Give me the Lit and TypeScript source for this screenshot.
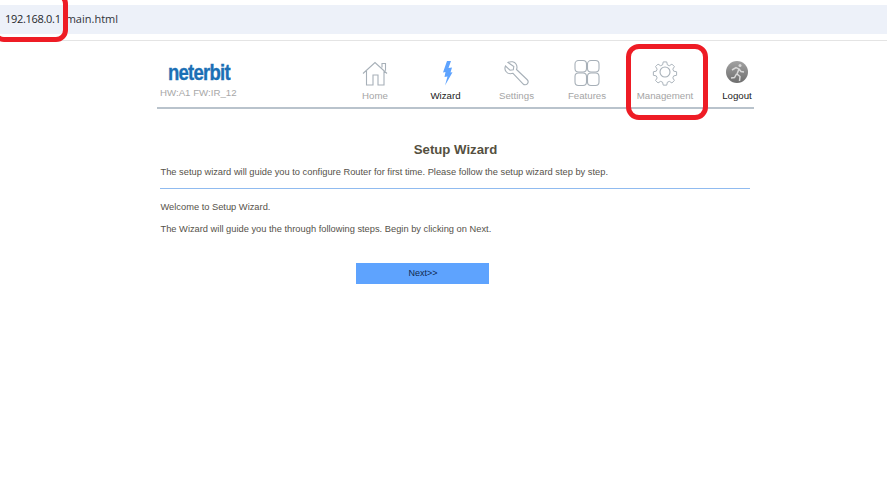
import { LitElement, html, css } from "lit";
import { customElement } from "lit/decorators.js";

@customElement("app-root")
export class AppRoot extends LitElement {
  static styles = css`
    :host { display: block; position: relative; width: 887px; height: 484px; background: #fff; overflow: hidden; font-family: "Liberation Sans", Arial, sans-serif; }
    .topbar { height: 41px; box-sizing: border-box; padding-top: 5px; border-bottom: 1px solid #e4e4e4; }
    .address { height: 29px; background: #edf1f9; display: flex; align-items: center; padding-left: 5px; padding-bottom: 2px; box-sizing: border-box; font-family: "Open Sans", "Liberation Sans", sans-serif; font-size: 11px; color: #303339; }
    .host { margin-right: 5px; color: #26282c; letter-spacing: -0.3px; }
    .page { width: 597px; margin-left: 157px; }
    .header { display: flex; height: 68px; box-sizing: border-box; border-bottom: 2px solid #b9c3cc; }
    .brand { width: 183px; flex: none; display: flex; flex-direction: column; align-items: flex-start; }
    .logo { margin: 21px 0 0 11px; font-size: 18.5px; line-height: 22px; font-weight: 700; color: #1b6fb5; letter-spacing: -0.75px; transform: scaleY(1.2); transform-origin: center; -webkit-text-stroke: 0.3px #1b6fb5; }
    .hw { margin: 2px 0 0 3px; font-size: 9.7px; line-height: 13px; color: #a8a8a8; }
    nav { flex: 1; display: grid; grid-template-columns: 70px 71px 71px 70px 86px 46px; justify-items: center; }
    .item { display: flex; flex-direction: column; align-items: center; color: #a5a5a5; font-size: 9.7px; line-height: 12px; padding-top: 18px; }
    .item svg { display: block; width: 32px; height: 28px; margin-bottom: 3px; fill: none; stroke: #a7b0b8; stroke-width: 1.1; }
    .item.dark { color: #1a1a1a; }
    .item.logout { justify-self: end; margin-right: 1px; }
    .content { padding: 0 4px 0 3px; }
    h1 { margin: 33px 0 0; text-align: center; font-size: 13.2px; line-height: 16px; font-weight: 700; color: #55503f; padding-left: 1px; }
    .lead { margin: 8px 0 0 0.5px; font-size: 9.3px; line-height: 13px; color: #56524a; }
    .rule { height: 1px; background: #90bbf0; margin-top: 9px; }
    .p1 { margin: 12px 0 0 0.5px; font-size: 9.3px; line-height: 13px; color: #56524a; }
    .p2 { margin: 9px 0 0 0.5px; font-size: 9.3px; line-height: 13px; color: #56524a; }
    .actions { margin-top: 27px; padding-left: 196px; }
    .next { display: flex; align-items: center; justify-content: center; width: 133px; height: 21px; background: #5ea3fe; color: #102a50; font-size: 9px; border: 0; padding: 0 0 1px 1px; font-family: inherit; }
    .mark { position: absolute; box-sizing: border-box; border: 5px solid #ee1c25; }
    .mark.a { left: -8px; top: -8px; width: 76px; height: 50px; border-radius: 12px; }
    .mark.b { left: 626px; top: 44px; width: 82px; height: 76px; border-radius: 13px; }
  `;

  render() {
    return html`
      <div class="topbar"><div class="address"><span class="host">192.168.0.1</span><span>main.html</span></div></div>
      <div class="page">
        <header class="header">
          <div class="brand">
            <div class="logo">neterbit</div>
            <div class="hw">HW:A1 FW:IR_12</div>
          </div>
          <nav>
            <div class="item">
              <svg viewBox="0 0 32 28"><path d="M4 14.500 16 3.500l12 11M23 8.500V4.500h3.500v7.200M7.500 12v14h6.500v-10h5v10h6V12"/></svg>
              Home
            </div>
            <div class="item dark">
              <svg viewBox="0 0 32 28"><path style="fill:#5ea3fe;stroke:none" d="M17 2h4l-2.500 7 3.500-.5-1.500 5 2-.3L15 26.500l2.500-9-3 .5 1-5-2.500.5z"/></svg>
              Wizard
            </div>
            <div class="item">
              <svg viewBox="0 0 32 28"><path d="M8 3.500c3-1.500 6.500-.8 8 1.500 1.300 2 1.200 3.800.5 5.500L27 20.500c1.500 1.500 1.300 3.200.3 4.300s-3 1.500-4.300 0L13 14.300c-2.500.7-5.500.4-7-1.800-1.200-1.700-1.300-3.800-.5-5.500l4.500 4.200 3.300-.5.500-3.200z"/></svg>
              Settings
            </div>
            <div class="item">
              <svg viewBox="0 0 32 28"><rect x="4" y="1.500" width="11.500" height="11.500" rx="3.500"/><rect x="16.500" y="1.500" width="11.500" height="11.500" rx="3.500"/><rect x="4" y="14" width="11.500" height="12.500" rx="3.500"/><rect x="16.500" y="14" width="11.500" height="12.500" rx="3.500"/></svg>
              Features
            </div>
            <div class="item">
              <svg viewBox="0 0 32 28"><circle cx="16" cy="13" r="5"/><path d="M14 1.500h4l.7 3.300 2.300 1 2.900-1.800 2.800 2.800-1.800 2.900 1 2.300 3.300.7v4l-3.300.7-1 2.300 1.800 2.900-2.800 2.800-2.900-1.800-2.300 1-.7 3.300h-4l-.7-3.300-2.300-1-2.900 1.800-2.800-2.800 1.800-2.900-1-2.300-3.300-.7v-4l3.300-.7 1-2.300-1.800-2.900 2.800-2.800 2.900 1.800 2.300-1z" transform="translate(1.900 1.600) scale(.88)"/></svg>
              Management
            </div>
            <div class="item dark logout">
              <svg viewBox="0 0 32 28">
                <defs><linearGradient id="g" x1="0" y1="0" x2="0" y2="1"><stop offset="0" stop-color="#a2a2a2"/><stop offset="1" stop-color="#6e6e6e"/></linearGradient></defs>
                <circle cx="16" cy="13" r="11" style="fill:url(#g);stroke:none"/>
                <circle cx="19" cy="6.500" r="1.500" style="fill:#d8d8d8;stroke:none"/>
                <path style="stroke:#d8d8d8;stroke-width:1.500" d="M11 11l4-2.500 3 1.500-2 5 3 2.500-.5 4.500M15.500 15l-2 3.500-3.500.5M18 10l2 2.500 3 .5"/>
              </svg>
              Logout
            </div>
          </nav>
        </header>
        <main class="content">
          <h1>Setup Wizard</h1>
          <p class="lead">The setup wizard will guide you to configure Router for first time. Please follow the setup wizard step by step.</p>
          <div class="rule"></div>
          <p class="p1">Welcome to Setup Wizard.</p>
          <p class="p2">The Wizard will guide you the through following steps. Begin by clicking on Next.</p>
          <div class="actions"><button class="next">Next&gt;&gt;</button></div>
        </main>
      </div>
      <div class="mark a"></div>
      <div class="mark b"></div>
    `;
  }
}
